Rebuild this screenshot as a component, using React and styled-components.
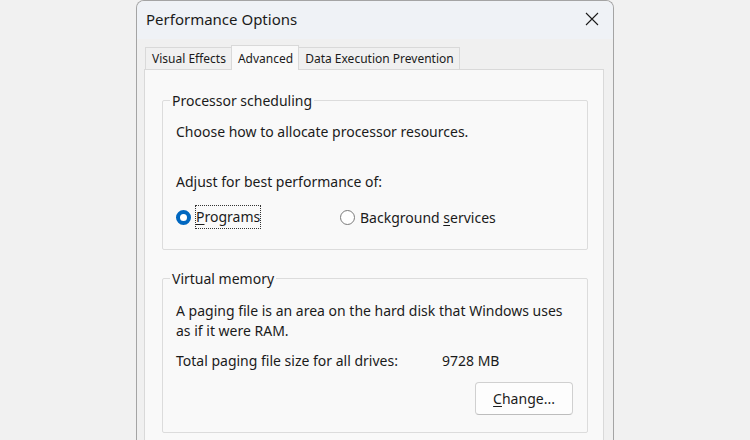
import React from "react";
import styled, { createGlobalStyle } from "styled-components";

const Global = createGlobalStyle`
  body {
    margin: 0;
    background: #f1f1f1;
    font-family: "Noto Sans", "Open Sans", sans-serif;
    color: #1b1b1b;
  }
`;

const Page = styled.div`
  width: 750px;
  height: 440px;
  overflow: hidden;
  background: #f1f1f1;
`;

const Window = styled.div`
  margin-left: 136px;
  width: 476px;
  height: 480px;
  border: 1px solid #a4a4a4;
  border-bottom: none;
  border-radius: 8px 8px 0 0;
  background: #f0f0f0;
  overflow: hidden;
`;

const TitleBar = styled.div`
  height: 38px;
  display: flex;
  align-items: center;
  justify-content: space-between;
  padding: 0 14px 2px 9px;
  box-sizing: border-box;
  background: #eff2f6;
`;

const Title = styled.span`
  font-size: 15px;
`;

const Close = styled.svg`
  width: 14px;
  height: 14px;
`;

const Body = styled.div`
  padding: 7px 9px 0 7px;
`;

const Tabs = styled.div`
  display: flex;
  align-items: flex-end;
  height: 23px;
  padding-left: 1px;
`;

const Tab = styled.div`
  height: ${(p) => (p.$active ? "24px" : "21px")};
  display: flex;
  align-items: center;
  padding: 0 5px 0 6px;
  font-size: 12px;
  border: 1px solid #d9d9d9;
  border-bottom: none;
  margin-left: ${(p) => (p.$active ? "-1px" : "0")};
  margin-right: ${(p) => (p.$active ? "-1px" : "0")};
  margin-bottom: ${(p) => (p.$active ? "-1px" : "0")};
  background: ${(p) => (p.$active ? "#f9f9f9" : "#f0f0f0")};
  position: relative;
  z-index: ${(p) => (p.$active ? 1 : 0)};
  & + & {
    border-left: ${(p) => (p.$active ? "1px solid #d9d9d9" : "none")};
  }
`;

const Panel = styled.div`
  background: #f9f9f9;
  border: 1px solid #d9d9d9;
  height: 400px;
  padding: 21px 15px 0 17px;
`;

const Group = styled.fieldset`
  margin: 0 0 19px 0;
  border: 1px solid #dcdcdc;
  border-radius: 2px;
  padding: 0 8px 0 13px;
  min-height: ${(p) => p.$h}px;
  box-sizing: border-box;
`;

const Legend = styled.legend`
  font-size: 14px;
  padding: 0 2px;
  margin-left: -6px;
`;

const Text = styled.div`
  font-size: 14px;
  line-height: 20px;
  margin-top: ${(p) => p.$mt || 0}px;
`;

const RadioRow = styled.div`
  display: flex;
  align-items: center;
  margin-top: 14px;
`;

const RadioItem = styled.label`
  display: flex;
  align-items: center;
  width: ${(p) => p.$w}px;
  font-size: 14px;
`;

const Dot = styled.span`
  width: 15px;
  height: 15px;
  box-sizing: border-box;
  border-radius: 50%;
  margin-right: 5px;
  border: ${(p) => (p.$on ? "4px solid #0067c0" : "1px solid #7a7a7a")};
  background: #fff;
`;

const Focus = styled.span`
  outline: 1px dotted #333;
  outline-offset: 0;
  padding: 1px 0 2px 0;
`;

const U = styled.span`
  text-decoration: underline;
  text-underline-offset: 2px;
`;

const SizeRow = styled.div`
  display: flex;
  font-size: 14px;
  margin-top: 10px;
`;

const SizeLabel = styled.span`
  width: 266px;
`;

const ButtonRow = styled.div`
  display: flex;
  justify-content: flex-end;
  margin-top: 12px;
`;

const Button = styled.button`
  width: 98px;
  height: 33px;
  font-family: inherit;
  font-size: 14px;
  color: #1b1b1b;
  background: #fdfdfd;
  border: 1px solid #d0d0d0;
  border-bottom-color: #bdbdbd;
  border-radius: 4px;
  margin-right: 6px;
`;

export default function App() {
  return (
    <Page>
      <Global />
      <Window>
        <TitleBar>
          <Title>Performance Options</Title>
          <Close viewBox="0 0 14 14">
            <path d="M1 1 L13 13 M13 1 L1 13" stroke="#1b1b1b" strokeWidth="1.1" />
          </Close>
        </TitleBar>
        <Body>
          <Tabs>
            <Tab>Visual Effects</Tab>
            <Tab $active>Advanced</Tab>
            <Tab>Data Execution Prevention</Tab>
          </Tabs>
          <Panel>
            <Group $h={159}>
              <Legend>Processor scheduling</Legend>
              <Text $mt={12}>Choose how to allocate processor resources.</Text>
              <Text $mt={30}>Adjust for best performance of:</Text>
              <RadioRow>
                <RadioItem $w={164}>
                  <Dot $on />
                  <Focus>
                    <U>P</U>rograms
                  </Focus>
                </RadioItem>
                <RadioItem>
                  <Dot />
                  <span>
                    Background <U>s</U>ervices
                  </span>
                </RadioItem>
              </RadioRow>
            </Group>
            <Group $h={164}>
              <Legend>Virtual memory</Legend>
              <Text $mt={13}>
                A paging file is an area on the hard disk that Windows uses
                <br />
                as if it were RAM.
              </Text>
              <SizeRow>
                <SizeLabel>Total paging file size for all drives:</SizeLabel>
                <span>9728 MB</span>
              </SizeRow>
              <ButtonRow>
                <Button>
                  <U>C</U>hange...
                </Button>
              </ButtonRow>
            </Group>
          </Panel>
        </Body>
      </Window>
    </Page>
  );
}
